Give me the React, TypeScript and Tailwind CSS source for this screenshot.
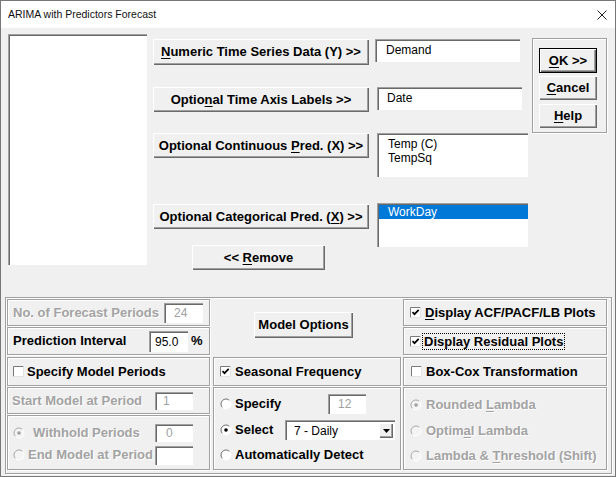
import type { ReactNode } from "react";

const raised =
  "bg-[#f0f0f0] shadow-[inset_1px_1px_0_#fff,inset_-1px_-1px_0_#696969,inset_-2px_-2px_0_#a0a0a0]";
const sunken = "bg-white shadow-[inset_1px_1px_0_#a0a0a0,inset_2px_2px_0_#696969]";
const etched = "border border-[#a0a0a0] shadow-[inset_1px_1px_0_#fff,1px_1px_0_#fff]";
const dim = "text-[#a3a3a3] [text-shadow:1px_1px_0_#fff]";

function U({ children }: { children: ReactNode }) {
  return <span className="underline decoration-1 underline-offset-[2px]">{children}</span>;
}

function Button({ className = "", children }: { className?: string; children: ReactNode }) {
  return (
    <div className={`${raised} flex items-center justify-center text-[13px] font-bold ${className}`}>
      <span>{children}</span>
    </div>
  );
}

function CheckBox({ checked = false }: { checked?: boolean }) {
  return (
    <svg width="11" height="11" viewBox="0 0 11 11" className="shrink-0">
      <rect x="0" y="0" width="11" height="11" fill="#fff" />
      <path d="M0.5 10.5V0.5H10.5" fill="none" stroke="#7a7a7a" />
      <path d="M0.5 10.5H10.5V0.5" fill="none" stroke="#e3e3e3" />
      {checked && <path d="M2.5 5.2l2 2 4.2-4.4" fill="none" stroke="#000" strokeWidth="1.7" />}
    </svg>
  );
}

function Radio({ on = false, off = false }: { on?: boolean; off?: boolean }) {
  return (
    <svg width="12" height="12" viewBox="0 0 12 12" className="shrink-0">
      <circle cx="6" cy="6" r="5" fill={off ? "#f4f4f4" : "#fff"} />
      <path d="M2.46 9.54A5 5 0 0 1 9.54 2.46" fill="none" stroke={off ? "#a8a8a8" : "#707070"} />
      <path d="M9.54 2.46A5 5 0 0 1 2.46 9.54" fill="none" stroke="#fff" />
      {on && <circle cx="6" cy="6" r="1.8" fill={off ? "#a0a0a0" : "#000"} />}
    </svg>
  );
}

function Field({ className = "", children }: { className?: string; children?: ReactNode }) {
  return <div className={`${sunken} text-[12px] leading-[14px] ${className}`}>{children}</div>;
}

export default function App() {
  return (
    <div className="w-[616px] h-[477px] border border-[#777] bg-[#f0f0f0] flex flex-col overflow-hidden text-black font-['Liberation_Sans',Arial,sans-serif]">
      {/* title bar */}
      <div className="h-[27px] shrink-0 bg-white flex items-center justify-between pl-[7px] pr-[8px]">
        <span className="text-[10.5px] text-[#111]">ARIMA with Predictors Forecast</span>
        <svg width="10" height="10" viewBox="0 0 10 10">
          <path d="M0.5 0.5l9 9M9.5 0.5l-9 9" stroke="#222" strokeWidth="1" />
        </svg>
      </div>

      {/* top section */}
      <div className="flex h-[269px] shrink-0 pl-[7px]">
        <div className={`${sunken} mt-[6px] w-[139px] h-[231px]`} />

        <div className="ml-[6px] w-[375px] flex flex-col">
          <div className="mt-[11px] flex h-[48px] items-start gap-[6px]">
            <Button className="w-[216px] h-[26px]">
              <U>N</U>umeric Time Series Data (Y) &gt;&gt;
            </Button>
            <Field className="w-[145px] h-[23px] pl-[11px] pt-[4px]">Demand</Field>
          </div>
          <div className="flex h-[46px] items-start gap-[8px]">
            <Button className="w-[216px] h-[25px]">
              Optio<U>n</U>al Time Axis Labels &gt;&gt;
            </Button>
            <Field className="w-[145px] h-[23px] pl-[10px] pt-[4px]">Date</Field>
          </div>
          <div className="flex h-[70px] items-start gap-[8px]">
            <Button className="w-[216px] h-[25px]">
              Optional Continuous <U>P</U>red. (X) &gt;&gt;
            </Button>
            <Field className="w-[151px] h-[44px] pl-[11px] pt-[4px] leading-[13px]">
              <div>Temp (C)</div>
              <div>TempSq</div>
            </Field>
          </div>
          <div className="flex h-[42px] items-start gap-[8px]">
            <Button className="mt-[1px] w-[216px] h-[25px]">
              Optional Categorical Pred. (<U>X</U>) &gt;&gt;
            </Button>
            <Field className="w-[151px] h-[44px] pt-[2px] pl-[2px]">
              <div className="h-[14px] bg-[#0078d7] text-white pl-[9px]">WorkDay</div>
            </Field>
          </div>
          <div className="pl-[39px]">
            <Button className="w-[133px] h-[25px]">
              &lt;&lt; <U>R</U>emove
            </Button>
          </div>
        </div>

        <div className={`${etched} ml-[4px] mt-[10px] w-[75px] h-[95px] flex flex-col pl-[6px] pt-[9px]`}>
          <div className="w-[58px] h-[25px] border border-black">
            <Button className="w-full h-full">
              <U>O</U>K &gt;&gt;
            </Button>
          </div>
          <Button className="mt-[3px] w-[58px] h-[24px]">
            <U>C</U>ancel
          </Button>
          <Button className="mt-[4px] w-[58px] h-[24px]">
            <U>H</U>elp
          </Button>
        </div>
      </div>

      {/* bottom frame */}
      <div className="pl-[4px]">
        <div className={`${etched} w-[607px] h-[177px] p-[1px] flex flex-col text-[13px] font-bold`}>
          <div className="flex h-[56px]">
            <div className="w-[203px] flex flex-col">
              <div className={`${etched} h-[27px] flex items-center pl-[5px] pr-[6px] ${dim}`}>
                <span className="flex-1">No. of Forecast Periods</span>
                <Field className="w-[39px] h-[20px] pl-[10px] pt-[3px] font-normal text-[#a0a0a0] [text-shadow:none]">24</Field>
              </div>
              <div className={`${etched} mt-[1px] h-[28px] flex items-center pl-[5px]`}>
                <span className="w-[136px]">Prediction Interval</span>
                <Field className="w-[39px] h-[21px] pl-[6px] pt-[4px] font-normal">95.0</Field>
                <span className="ml-[3px]">%</span>
              </div>
            </div>
            <div className="w-[193px]">
              <Button className="ml-[44px] mt-[13px] w-[99px] h-[26px]">Model Options</Button>
            </div>
            <div className="w-[204px] flex flex-col">
              <div className={`${etched} h-[27px] flex items-center pl-[6px] gap-[4px]`}>
                <CheckBox checked />
                <span>
                  <U>D</U>isplay ACF/PACF/LB Plots
                </span>
              </div>
              <div className={`${etched} mt-[1px] h-[28px] flex items-center pl-[6px] gap-[2px]`}>
                <CheckBox checked />
                <span className="outline-1 outline-dotted outline-black px-[1px] leading-[15px]">
                  Display Residual Plots
                </span>
              </div>
            </div>
          </div>

          <div className="mt-[2px] flex h-[113px]">
            {/* left panel */}
            <div className="w-[203px] flex flex-col">
              <div className={`${etched} h-[29px] flex items-center pl-[5px] gap-[3px]`}>
                <CheckBox />
                <span>Specify Model Periods</span>
              </div>
              <div className={`${etched} mt-[1px] h-[27px] flex items-center pl-[4px] pr-[16px] ${dim}`}>
                <span className="flex-1">Start Model at Period</span>
                <Field className="w-[38px] h-[18px] pl-[8px] pt-[2px] font-normal text-[#a0a0a0] [text-shadow:none]">1</Field>
              </div>
              <div className={`${etched} mt-[1px] h-[55px] flex flex-col pt-[6px] pl-[5px] pr-[16px] ${dim}`}>
                <div className="h-[22px] flex items-center">
                  <Radio on off />
                  <span className="ml-[8px] flex-1">Withhold Periods</span>
                  <Field className="w-[38px] h-[18px] pl-[11px] pt-[2px] font-normal text-[#a0a0a0] [text-shadow:none]">0</Field>
                </div>
                <div className="h-[22px] flex items-center">
                  <Radio off />
                  <span className="ml-[3px] flex-1">End Model at Period</span>
                  <Field className="w-[38px] h-[19px]" />
                </div>
              </div>
            </div>

            {/* middle panel */}
            <div className="ml-[3px] w-[188px] flex flex-col">
              <div className={`${etched} h-[29px] flex items-center pl-[6px] gap-[4px]`}>
                <CheckBox checked />
                <span>Seasonal Frequency</span>
              </div>
              <div className={`${etched} mt-[1px] h-[83px] flex flex-col pt-[3px] pl-[6px]`}>
                <div className="h-[26px] flex items-center">
                  <Radio />
                  <span className="ml-[3px]">Specify</span>
                  <Field className="ml-auto mr-[34px] w-[38px] h-[20px] pl-[10px] pt-[3px] font-normal text-[#a0a0a0]">12</Field>
                </div>
                <div className="h-[26px] flex items-center">
                  <Radio on />
                  <span className="ml-[3px]">Select</span>
                  <Field className="ml-auto mr-[5px] w-[110px] h-[20px] flex items-center justify-between pl-[9px] pr-[2px] pt-[1px] font-normal">
                    <span className="pt-[1px]">7 - Daily</span>
                    <span className={`${raised} w-[14px] h-[15px] flex items-center justify-center`}>
                      <svg width="7" height="4" viewBox="0 0 7 4">
                        <path d="M0 0h7L3.5 4z" fill="#000" />
                      </svg>
                    </span>
                  </Field>
                </div>
                <div className="h-[24px] flex items-center">
                  <Radio />
                  <span className="ml-[3px]">Automatically Detect</span>
                </div>
              </div>
            </div>

            {/* right panel */}
            <div className="ml-[2px] w-[204px] flex flex-col">
              <div className={`${etched} h-[29px] flex items-center pl-[7px] gap-[4px]`}>
                <CheckBox />
                <span>Box-Cox Transformation</span>
              </div>
              <div className={`${etched} mt-[1px] h-[83px] flex flex-col pt-[4px] pl-[6px] ${dim}`}>
                <div className="h-[26px] flex items-center gap-[4px]">
                  <Radio on off />
                  <span>
                    Rounded <U>L</U>ambda
                  </span>
                </div>
                <div className="h-[25px] flex items-center gap-[4px]">
                  <Radio off />
                  <span>
                    Optim<U>a</U>l Lambda
                  </span>
                </div>
                <div className="h-[26px] flex items-center gap-[4px]">
                  <Radio off />
                  <span>
                    Lambda &amp; <U>T</U>hreshold (Shift)
                  </span>
                </div>
              </div>
            </div>
          </div>
        </div>
      </div>
    </div>
  );
}
